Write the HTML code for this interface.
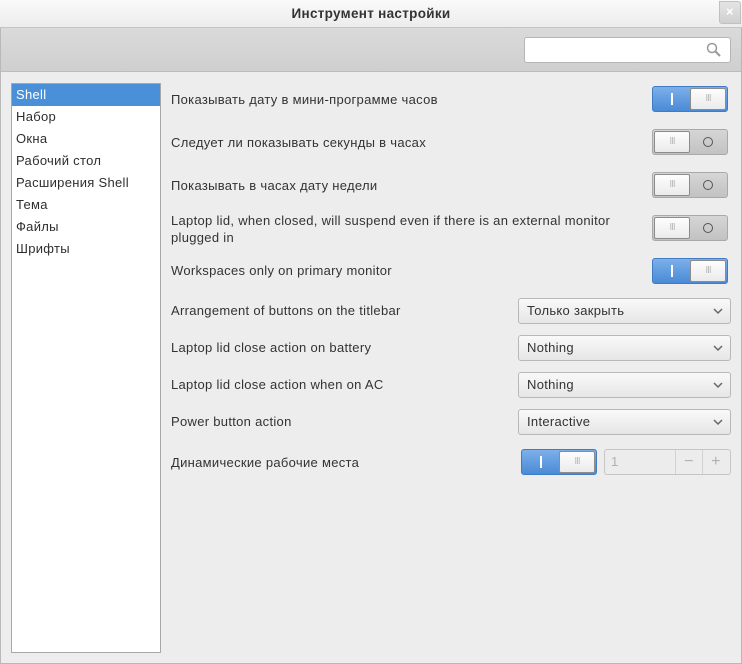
<!DOCTYPE html>
<html><head><meta charset="utf-8"><style>
*{box-sizing:border-box;margin:0;padding:0}
body{width:742px;height:664px;overflow:hidden;background:#ededed;font-family:"Liberation Sans","DejaVu Sans",sans-serif;font-size:13px;letter-spacing:0.3px;color:#3c3c3c;position:relative}
.win{position:absolute;left:0;top:0;width:742px;height:664px;border:1px solid #b8b8b8;border-radius:4px 4px 0 0}
.title{position:absolute;left:0;top:0;width:742px;height:28px;background:linear-gradient(#fafafa,#ececec);border-bottom:1px solid #c4c4c4;text-align:center;line-height:27px;font-weight:bold;font-size:13.5px;color:#333}
.close{position:absolute;right:1px;top:1px;width:22px;height:23px;background:linear-gradient(#e4e4e4,#d0d0d0);border:1px solid #c0c0c0;border-radius:0 3px 0 3px;color:#fff;font-size:13px;line-height:20px;text-align:center;font-weight:bold}
.tool{position:absolute;left:1px;top:28px;width:740px;height:44px;background:linear-gradient(#dadada,#cfcfcf);border-bottom:1px solid #bcbcbc}
.search{position:absolute;left:524px;top:37px;width:207px;height:26px;background:#fff;border:1px solid #b5b5b5;border-radius:3px}
.side{position:absolute;left:11px;top:83px;width:150px;height:570px;background:#fff;border:1px solid #a8a8a8}
.side div{height:22px;line-height:22px;padding-left:4px;color:#2e2e2e}
.side .sel{background:#4a90d9;color:#fff}
.lbl{position:absolute;left:171px;color:#333}
.tg{position:absolute;width:76px;height:26px;border-radius:3px}
.on{background:linear-gradient(#7cb0ea,#4a8ad6);border:1px solid #3f7cc4}
.off{background:linear-gradient(#d6d6d6,#c2c2c2);border:1px solid #a9a9a9}
.knob{position:absolute;top:1px;width:36px;height:22px;background:linear-gradient(#fdfdfd,#ebebeb);border:1px solid #8c8c8c;border-radius:2px;color:#bbb;font-size:10px;text-align:center;line-height:20px;letter-spacing:-1px}
.on .knob{right:1px}.off .knob{left:1px}
.bar{position:absolute;left:18px;top:6px;width:2px;height:12px;background:#fff}
.circ{position:absolute;right:14px;top:7px;width:10px;height:10px;border:1px solid #555;border-radius:50%}
.dd{position:absolute;left:518px;width:213px;height:26px;background:linear-gradient(#f9f9f9,#e6e6e6);border:1px solid #b8b8b8;border-radius:3px;line-height:24px;padding-left:8px;color:#333}
.dd svg{position:absolute;right:7px;top:9px}
.spin{position:absolute;left:604px;top:449px;width:127px;height:26px;border:1px solid #c6c6c6;border-radius:3px;background:#ececec;color:#b0b0b0;line-height:24px;padding-left:6px}
.spin span{position:absolute;top:0;width:27px;height:24px;border-left:1px solid #d2d2d2;text-align:center;font-size:16px}
</style></head><body>
<div class="win"></div>
<div class="title">Инструмент настройки<div class="close">×</div></div>
<div class="tool"></div>
<div class="search"><svg width="16" height="16" style="position:absolute;right:8px;top:4px" viewBox="0 0 16 16"><circle cx="6" cy="6" r="4.5" fill="none" stroke="#999" stroke-width="1.5"/><path d="M9.5 9.5L14 14" stroke="#999" stroke-width="2"/></svg></div>
<div class="side">
<div class="sel">Shell</div><div>Набор</div><div>Окна</div><div>Рабочий стол</div><div>Расширения Shell</div><div>Тема</div><div>Файлы</div><div>Шрифты</div>
</div>

<div class="lbl" style="top:92px">Показывать дату в мини-программе часов</div>
<div class="tg on" style="left:652px;top:86px"><div class="bar"></div><div class="knob">III</div></div>

<div class="lbl" style="top:135px">Следует ли показывать секунды в часах</div>
<div class="tg off" style="left:652px;top:129px"><div class="knob">III</div><div class="circ"></div></div>

<div class="lbl" style="top:178px">Показывать в часах дату недели</div>
<div class="tg off" style="left:652px;top:172px"><div class="knob">III</div><div class="circ"></div></div>

<div class="lbl" style="top:212px;line-height:17px">Laptop lid, when closed, will suspend even if there is an external monitor<br>plugged in</div>
<div class="tg off" style="left:652px;top:215px"><div class="knob">III</div><div class="circ"></div></div>

<div class="lbl" style="top:263px">Workspaces only on primary monitor</div>
<div class="tg on" style="left:652px;top:258px"><div class="bar"></div><div class="knob">III</div></div>

<div class="lbl" style="top:303px">Arrangement of buttons on the titlebar</div>
<div class="dd" style="top:298px">Только закрыть<svg width="10" height="7"><path d="M1 1L5 5L9 1" fill="none" stroke="#666" stroke-width="1.5"/></svg></div>

<div class="lbl" style="top:340px">Laptop lid close action on battery</div>
<div class="dd" style="top:335px">Nothing<svg width="10" height="7"><path d="M1 1L5 5L9 1" fill="none" stroke="#666" stroke-width="1.5"/></svg></div>

<div class="lbl" style="top:377px">Laptop lid close action when on AC</div>
<div class="dd" style="top:372px">Nothing<svg width="10" height="7"><path d="M1 1L5 5L9 1" fill="none" stroke="#666" stroke-width="1.5"/></svg></div>

<div class="lbl" style="top:414px">Power button action</div>
<div class="dd" style="top:409px">Interactive<svg width="10" height="7"><path d="M1 1L5 5L9 1" fill="none" stroke="#666" stroke-width="1.5"/></svg></div>

<div class="lbl" style="top:455px">Динамические рабочие места</div>
<div class="tg on" style="left:521px;top:449px"><div class="bar"></div><div class="knob">III</div></div>
<div class="spin">1<span style="left:70px">−</span><span style="left:97px">+</span></div>
</body></html>
